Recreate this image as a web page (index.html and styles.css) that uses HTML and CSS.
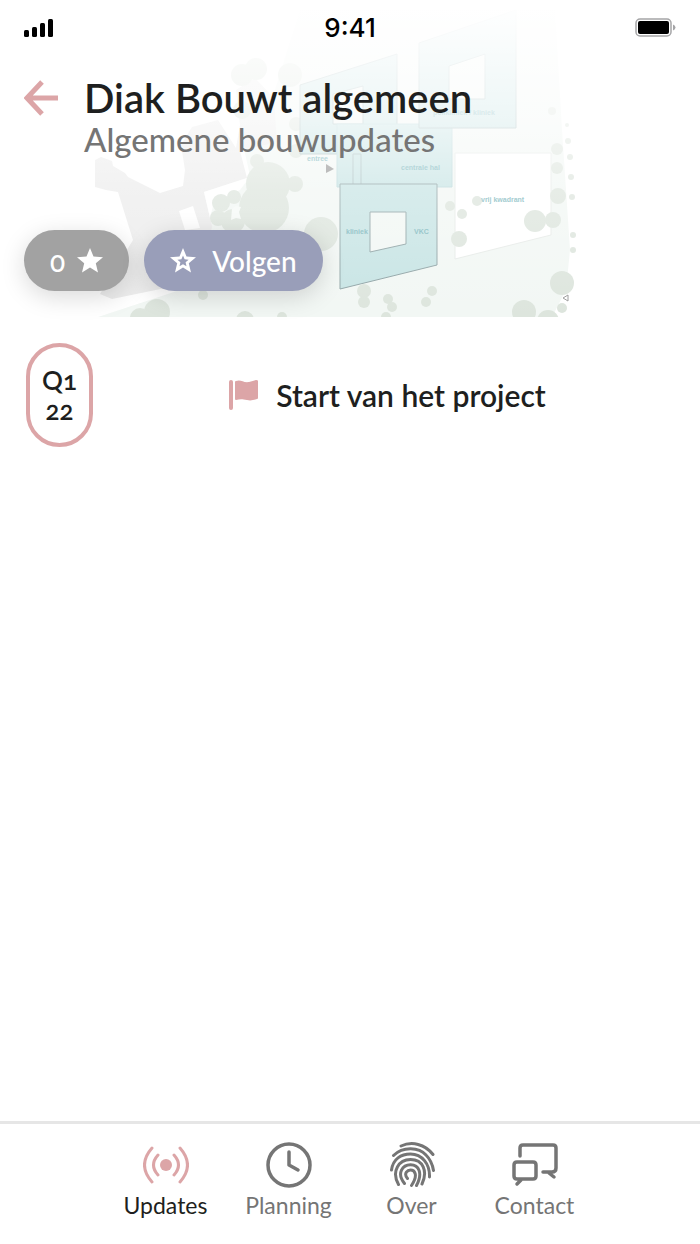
FILE: index.html
```
<!DOCTYPE html>
<html lang="nl">
<head>
    <meta charset="UTF-8">
    <meta name="viewport" content="width=device-width, initial-scale=1.0">
    <title>Diak Bouwt algemeen</title>
    <link rel="stylesheet" href="styles.css">
</head>
<body>

    <header class="hero">
        <!-- Site plan -->
        <svg class="site-plan" viewBox="0 0 700 317" preserveAspectRatio="xMinYMax slice" aria-hidden="true">
            <defs>
                <linearGradient id="fade" x1="0" y1="0" x2="0" y2="1">
                    <stop offset="0" stop-color="#fff"/>
                    <stop offset="0.1" stop-color="#fff" stop-opacity="0.93"/>
                    <stop offset="0.38" stop-color="#fff" stop-opacity="0.68"/>
                    <stop offset="0.6" stop-color="#fff" stop-opacity="0.3"/>
                    <stop offset="1" stop-color="#fff" stop-opacity="0"/>
                </linearGradient>
            </defs>
            <path fill="#f2f7f4" d="M204 192 L250 176 L240 130 L275 90 L300 10 H555 L562 130 L570 250 L566 290 L552 317 H98 L180 290 L215 265Z"/>
            <path fill="#ececec" d="M95 160 L101 157 L112 161 L113 166 L125 173 L128 177 L142 184 L160 193 L183 186 L185 170 L181 145 L192 127 L218 120 L236 148 L240 125 L236 90 L255 78 L274 98 L277 142 L240 151 L247 178 L204 192 L212 226 L205 270 L180 285 L112 299 L100 294 L133 240 L118 192 L106 190 L95 187Z"/>
            <path fill="#fff" d="M179 211 L193 206 L200 228 L185 230Z M204 192 L250 177 L240 190 L214 202 L210 218Z"/>
            <g fill="#dde5dd">
                <circle cx="242" cy="75" r="11"/><circle cx="256" cy="69" r="11"/><circle cx="290" cy="75" r="12"/>
                <circle cx="242" cy="110" r="9"/><circle cx="296" cy="124" r="7"/><circle cx="296" cy="151" r="7"/>
                <circle cx="257" cy="161" r="7"/><circle cx="268" cy="184" r="22"/><circle cx="295" cy="184" r="8"/>
                <circle cx="264" cy="208" r="25"/><circle cx="234" cy="197" r="7"/><circle cx="221" cy="203" r="9"/>
                <circle cx="218" cy="218" r="8"/><circle cx="233" cy="221" r="12"/><circle cx="321" cy="234" r="17"/>
                <circle cx="157" cy="312" r="13"/><circle cx="140" cy="318" r="10"/><circle cx="203" cy="295" r="5"/>
            </g>
            <path fill="#f6faf7" d="M232 209 L236 206 L241 207 L239 212 L241 219 L236 218 L231 220Z"/>
            <g fill="#c7e4e4" stroke="#a9bfc0">
                <path d="M300 85 L397 54 V154 H300Z M333 94 L363 86 V124 H333Z" fill-rule="evenodd"/>
                <path d="M337 124 H452 V187 H337Z" stroke="#b9d8da"/>
                <path d="M419 43 L516 10 V128 H419Z M449 66 L485 54 V99 H449Z" fill-rule="evenodd"/>
                <path d="M353 154 H361 V185 H353Z"/>
                <path stroke="#8fa3a5" d="M340 184 H437 V265 L340 289Z M370 212 H406 V244 L370 252Z" fill-rule="evenodd"/>
            </g>
            <path fill="#fff" stroke="#e6eae7" d="M455 153 H551 V235 L455 259Z"/>
            <g fill="#dde5dd">
                <circle cx="557" cy="149" r="6"/><circle cx="557" cy="168" r="6"/><circle cx="558" cy="196" r="8"/>
                <circle cx="552" cy="111" r="4"/><circle cx="567" cy="125" r="2"/><circle cx="568" cy="141" r="3"/>
                <circle cx="570" cy="157" r="3"/><circle cx="571" cy="177" r="3"/><circle cx="572" cy="197" r="3"/>
                <circle cx="573" cy="235" r="3"/><circle cx="573" cy="250" r="3"/><circle cx="477" cy="201" r="5"/>
                <circle cx="450" cy="206" r="5"/><circle cx="462" cy="214" r="5"/><circle cx="459" cy="239" r="8"/>
                <circle cx="535" cy="221" r="11"/><circle cx="553" cy="220" r="8"/><circle cx="562" cy="283" r="12"/>
                <circle cx="562" cy="308" r="5"/><circle cx="524" cy="312" r="12"/><circle cx="548" cy="321" r="11"/>
                <circle cx="364" cy="291" r="7"/><circle cx="364" cy="302" r="6"/><circle cx="388" cy="299" r="5"/>
                <circle cx="392" cy="307" r="5"/><circle cx="426" cy="302" r="5"/><circle cx="432" cy="291" r="5"/>
                <circle cx="386" cy="317" r="5"/><circle cx="245" cy="320" r="9"/><circle cx="282" cy="317" r="5"/>
            </g>
            <g class="plan-label">
                <text x="307" y="161">entree</text>
                <text x="401" y="170">centrale hal</text>
                <text x="433" y="115">polikliniek / kliniek</text>
                <text x="481" y="202">vrij kwadrant</text>
                <text x="346" y="234">kliniek</text>
                <text x="414" y="234">VKC</text>
            </g>
            <path fill="#8f8f8f" d="M326 164 L334 169 L326 173Z"/>
            <path fill="none" stroke="#9a9a9a" d="M568 295 V301 L563 298Z"/>
            <rect width="700" height="317" fill="url(#fade)"/>
        </svg>

        <div class="status-bar">
            <div class="status-side">
                <svg class="signal" viewBox="0 0 30 18" role="img" aria-label="Signaal">
                    <rect x="0" y="11" width="5" height="7" rx="1.5"/>
                    <rect x="8" y="8" width="5" height="10" rx="1.5"/>
                    <rect x="16" y="4" width="5" height="14" rx="1.5"/>
                    <rect x="24" y="0" width="5" height="18" rx="1.5"/>
                </svg>
            </div>
            <time class="clock">9:41</time>
            <div class="status-side">
                <svg class="battery" viewBox="0 0 41 19" role="img" aria-label="Batterij vol">
                    <rect x="1" y="1" width="35" height="17" rx="4" fill="#fff" stroke="#a5a5a7" stroke-width="1.5"/>
                    <rect x="3" y="3" width="31" height="13" rx="2"/>
                    <path d="M38 6.5 Q40.500 7.500 40.500 9.500 T38 12.500Z" fill="#a5a5a7"/>
                </svg>
            </div>
        </div>

        <div class="heading">
            <a class="back" href="#" aria-label="Terug">
                <svg viewBox="0 0 34 36" aria-hidden="true">
                    <path d="M18 2 L3 18 L18 34 M3 18 H34"/>
                </svg>
            </a>
            <div>
                <h1>Diak Bouwt algemeen</h1>
                <p class="subtitle">Algemene bouwupdates</p>
            </div>
        </div>

        <div class="actions">
            <button type="button" class="pill pill-count">
                0
                <svg viewBox="0 0 26 25" aria-hidden="true">
                    <path d="M13 0 L16.500 8.500 L26 9.300 L18.800 15.300 L21 24.500 L13 19.600 L5 24.500 L7.200 15.300 L0 9.300 L9.500 8.500Z"/>
                </svg>
            </button>
            <button type="button" class="pill pill-follow">
                <svg viewBox="0 0 26 25" aria-hidden="true">
                    <path fill-rule="evenodd" d="M13 0 L16.500 8.500 L26 9.300 L18.800 15.300 L21 24.500 L13 19.600 L5 24.500 L7.200 15.300 L0 9.300 L9.500 8.500Z M13 7.500 L11.400 11.300 L7.400 11.700 L10.400 14.300 L9.500 18.300 L13 16.200 L16.500 18.300 L15.600 14.300 L18.600 11.700 L14.600 11.300Z"/>
                </svg>
                Volgen
            </button>
        </div>
    </header>

    <main class="timeline">
        <div class="milestone">
            <div class="quarter"><span>Q1</span><span>22</span></div>
            <h2>
                <svg viewBox="0 0 29 30" aria-hidden="true">
                    <rect width="4" height="30" rx="2"/>
                    <path d="M6 2 Q6 1 7 1 C12 -1 14 3 20 2 Q24 1 27 0 Q29 0 29 1 V18 Q29 19 28 19 C24 20 22 21 18 20 C13 19 11 19 7 20 Q6 20 6 19Z"/>
                </svg>
                Start van het project
            </h2>
        </div>
    </main>

    <nav class="tab-bar">
        <a class="tab active" href="#">
            <svg viewBox="0 0 46 46" aria-hidden="true">
                <circle class="dot" cx="23" cy="23" r="6"/>
                <path d="M15 13 Q6 23 15 33 M31 13 Q40 23 31 33 M9 6 Q-6 23 9 40 M37 6 Q52 23 37 40"/>
            </svg>
            Updates
        </a>
        <a class="tab" href="#">
            <svg class="bold" viewBox="0 0 46 46" aria-hidden="true">
                <circle cx="23" cy="23" r="21"/>
                <path d="M23 10 V23 L32 28"/>
            </svg>
            Planning
        </a>
        <a class="tab" href="#">
            <svg viewBox="0 0 46 46" aria-hidden="true">
                <path d="M12 4 C23 -1 36 2 44 12.500 M4.500 13.500 C14 4 30 5 37 13 Q43 19 44.500 28.500 M2.500 28 C4 17 12 12 21.500 12 C33 12 41 22 40.500 35 M9.500 42.500 C2 29 10 17.500 21.500 17.500 C34 17.500 39 29 33 42 M15.500 41.500 C7 31 14 22.700 21.500 22.700 C30 22.700 34 31 27.500 43.500 M18.500 36.500 C14 31 19 28 21.500 28 C25 28 30 32 22.500 43.500"/>
            </svg>
            Over
        </a>
        <a class="tab" href="#">
            <svg class="bold" viewBox="0 0 46 46" aria-hidden="true">
                <path d="M8 14 V6 Q8 3 11 3 H41 Q44 3 44 6 V26 Q44 30 40 30 H31 M37 31 L42 35 M5 20 H21 Q24 20 24 23 V34 Q24 37 21 37 H5 Q2 37 2 34 V23 Q2 20 5 20Z M9 38 L5 42"/>
            </svg>
            Contact
        </a>
    </nav>

</body>
</html>
```
FILE: styles.css
```
* {
    box-sizing: border-box;
}
body {
    font-family: Lato, "Noto Sans", sans-serif;
    background-color: #fff;
    color: #1e1f20;
    margin: 0;
    min-height: 100vh;
    display: flex;
    flex-direction: column;
    font-variant-numeric: oldstyle-nums;
}
h1,
h2,
p {
    margin: 0;
}
svg {
    display: block;
    flex: none;
}
.hero {
    position: relative;
    padding: 0 24px 26px;
}
.site-plan {
    position: absolute;
    top: 0;
    left: 0;
    width: 100%;
    height: 100%;
}
.plan-label {
    font-family: "Liberation Sans", sans-serif;
    font-size: 7px;
    font-weight: bold;
    fill: #80b8be;
}
.status-bar,
.heading,
.actions {
    position: relative;
    display: flex;
}
.status-bar {
    height: 55px;
    align-items: center;
}
.status-side {
    flex: 1;
    display: flex;
}
.status-side:last-child {
    justify-content: flex-end;
}
.signal {
    width: 30px;
    height: 18px;
}
.battery {
    width: 41px;
    height: 19px;
}
.clock {
    font-family: Inter, sans-serif;
    font-size: 26px;
    font-weight: 500;
    color: #000;
}
.heading {
    gap: 26px;
    padding-top: 22px;
}
.back {
    padding-top: 3px;
}
.back svg {
    width: 34px;
    height: 36px;
    fill: none;
    stroke: #dca5a7;
    stroke-width: 5;
}
h1 {
    font-size: 40px;
    font-weight: 600;
    line-height: 42px;
}
.subtitle {
    font-size: 33px;
    font-weight: 500;
    line-height: 40px;
    color: #757575;
}
.actions {
    gap: 15px;
    padding-top: 71px;
}
.pill {
    display: flex;
    align-items: center;
    height: 61px;
    padding: 0 26px;
    border: none;
    border-radius: 31px;
    color: #fff;
    font-family: inherit;
    font-size: 28px;
    font-weight: 500;
    line-height: 32px;
    font-variant-numeric: inherit;
    box-shadow: 0 6px 24px rgba(0, 0, 0, 0.15);
    cursor: pointer;
}
.pill svg {
    width: 26px;
    height: 25px;
    fill: #fff;
}
.pill-count {
    gap: 12px;
    background-color: #a2a2a2;
}
.pill-follow {
    gap: 16px;
    background-color: #999eb9;
}
.timeline {
    flex: 1;
    padding: 26px;
}
.milestone {
    display: flex;
    align-items: center;
}
.quarter {
    display: flex;
    flex-direction: column;
    align-items: center;
    justify-content: center;
    width: 67px;
    height: 104px;
    border: 4px solid #dca5a7;
    border-radius: 34px;
    font-size: 26px;
    font-weight: 600;
    line-height: 30px;
}
h2 {
    flex: 1;
    display: flex;
    align-items: center;
    justify-content: center;
    gap: 18px;
    padding-left: 8px;
    font-size: 30px;
    font-weight: 600;
}
h2 svg {
    width: 29px;
    height: 30px;
    fill: #dca5a7;
}
.tab-bar {
    display: flex;
    justify-content: center;
    padding: 18px 0 24px;
    border-top: 3px solid #e6e6e6;
}
.tab {
    display: flex;
    flex-direction: column;
    align-items: center;
    gap: 2px;
    width: 123px;
    color: #757575;
    font-size: 23px;
    line-height: 30px;
    text-decoration: none;
}
.tab.active {
    color: #1e1f20;
}
.tab svg {
    width: 46px;
    height: 46px;
    fill: none;
    stroke: currentColor;
    stroke-width: 3;
    stroke-linecap: round;
    stroke-linejoin: round;
}
.tab .bold {
    stroke-width: 3.5;
}
.tab.active svg {
    stroke: #dca5a7;
}
.tab .dot {
    fill: #dca5a7;
    stroke: none;
}
```
